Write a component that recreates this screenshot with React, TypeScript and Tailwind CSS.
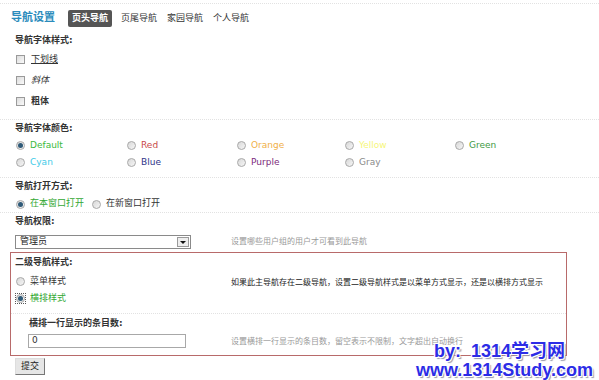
import React from 'react';

const cjk = "font-['DejaVu_Sans','Noto_Sans_CJK_SC',sans-serif]";

function Check({ label, className = '' }: { label: string; className?: string }) {
    return (
        <div className="flex h-[21px] items-center pl-[16px]">
            <span className="h-[9px] w-[9px] border border-[#9a9a9a] bg-gradient-to-br from-[#dcdcdc] to-[#fafafa]" />
            <span className={`ml-[6px] text-[9px] ${className}`}>{label}</span>
        </div>
    );
}

function Radio({ label, checked = false, color = 'text-[#333]', focus = false }: { label: string; checked?: boolean; color?: string; focus?: boolean }) {
    return (
        <div className="flex items-center">
            <span className={`flex items-center justify-center ${focus ? 'outline outline-1 outline-dotted outline-[#555]' : ''}`}>
                <span className="flex h-[9px] w-[9px] items-center justify-center rounded-full border border-[#a8a8a8] bg-gradient-to-br from-[#d8d8d8] to-[#f6f6f6]">
                    {checked && <span className="h-[5px] w-[5px] rounded-full bg-[#2f5a78]" />}
                </span>
            </span>
            <span className={`ml-[5px] text-[9px] ${color}`}>{label}</span>
        </div>
    );
}

function Sep() {
    return <div className="h-0 border-t border-dotted border-[#e2e2e2]" />;
}

function Label({ children, className = '' }: { children: React.ReactNode; className?: string }) {
    return <div className={`flex items-center text-[9px] font-bold text-[#333] ${className}`}>{children}</div>;
}

export default function App() {
    const colors: [string, string][] = [
        ['Default', 'text-[#3cb93c]'],
        ['Red', 'text-[#c84848]'],
        ['Orange', 'text-[#f0b048]'],
        ['Yellow', 'text-[#f6f67a]'],
        ['Green', 'text-[#3f9a45]'],
        ['Cyan', 'text-[#42cbe8]'],
        ['Blue', 'text-[#2e3488]'],
        ['Purple', 'text-[#7c2a7c]'],
        ['Gray', 'text-[#8a8a8a]'],
    ];

    return (
        <div className={`relative h-[380px] w-[599px] overflow-hidden bg-white text-[#333] ${cjk}`}>
            <div className="h-[3px]" />
            <Sep />

            {/* Header */}
            <div className="flex h-[29px] items-center pl-[11px]">
                <span className="text-[11px] font-bold text-[#2b8cbc]">导航设置</span>
                <div className="ml-[13px] flex items-center gap-[8px] text-[9px]">
                    <span className="rounded-[2px] bg-[#555] px-[4px] py-[2px] font-bold text-white">页头导航</span>
                    <span className="px-[1px]">页尾导航</span>
                    <span className="px-[1px]">家园导航</span>
                    <span className="px-[1px]">个人导航</span>
                </div>
            </div>

            {/* Font style */}
            <Label className="h-[16px] pl-[15px]">导航字体样式:</Label>
            <Check label="下划线" className="underline" />
            <Check label="斜体" className="italic" />
            <Check label="粗体" className="font-bold" />
            <div className="h-[7px]" />
            <Sep />

            {/* Font colour */}
            <Label className="h-[17px] pl-[15px]">导航字体颜色:</Label>
            <div className="grid grid-cols-[111px_110px_108px_110px_110px] pl-[16px]">
                {colors.map(([name, c], i) => (
                    <div key={name} className="flex h-[17px] items-center">
                        <Radio label={name} color={c} checked={i === 0} />
                    </div>
                ))}
            </div>
            <div className="h-[6px]" />
            <Sep />

            {/* Open mode */}
            <Label className="h-[18px] pl-[15px]">导航打开方式:</Label>
            <div className="flex h-[16px] items-center gap-[8px] pl-[16px]">
                <Radio label="在本窗口打开" checked color="text-[#33a833]" />
                <Radio label="在新窗口打开" />
            </div>
            <Sep />

            {/* Permission */}
            <Label className="h-[18px] pl-[15px]">导航权限:</Label>
            <div className="mt-[4px] flex items-center pl-[15px]">
                <div className="flex h-[14px] w-[176px] items-center justify-between border border-[#8a8a8a] bg-white pl-[4px] pr-[1px]">
                    <span className="text-[9px] text-[#222]">管理员</span>
                    <span className="flex h-[10px] w-[12px] items-center justify-center border border-[#9a9a9a] bg-[#eee]">
                        <span className="h-0 w-0 border-x-[3px] border-t-[3px] border-x-transparent border-t-[#111]" />
                    </span>
                </div>
                <span className="ml-[40px] text-[8px] text-[#999]">设置哪些用户组的用户才可看到此导航</span>
            </div>

            {/* Sub nav box */}
            <div className="mt-[3px] ml-[10px] w-[557px] border border-[#b86a6a]">
                <Label className="h-[19px] pl-[4px]">二级导航样式:</Label>
                <div className="flex">
                    <div className="w-[220px] pl-[5px]">
                        <div className="flex h-[19px] items-center">
                            <Radio label="菜单样式" />
                        </div>
                        <div className="flex h-[15px] items-center">
                            <Radio label="横排样式" checked focus color="text-[#33a833]" />
                        </div>
                    </div>
                    <div className="flex h-[21px] items-center text-[8px] text-[#222]">
                        如果此主导航存在二级导航，设置二级导航样式是以菜单方式显示，还是以横排方式显示
                    </div>
                </div>
                <div className="h-[7px]" />
                <Sep />
                <Label className="h-[20px] pl-[18px]">横排一行显示的条目数:</Label>
                <div className="flex items-center pb-[7px] pl-[17px]">
                    <div className="flex h-[14px] w-[158px] items-center border border-[#a8a8a8] bg-white pl-[3px] text-[9px] text-[#333]">0</div>
                    <span className="ml-[45px] mt-[2px] text-[8px] text-[#999]">设置横排一行显示的条目数，留空表示不限制，文字超出自动换行</span>
                </div>
            </div>

            {/* Submit */}
            <div className="mt-[2px] flex pl-[15px]">
                <button type="button" className="flex h-[17px] w-[30px] items-center justify-center border border-t-[#ddd] border-l-[#ddd] border-r-[#777] border-b-[#777] bg-[#e6e6e6] text-[9px] text-[#222]">
                    提交
                </button>
            </div>

            {/* Watermark */}
            <div className="absolute right-[6px] bottom-0 flex flex-col items-end font-['Liberation_Sans','Noto_Sans_CJK_SC',sans-serif] text-[18px] leading-[19px] font-bold text-[#2c2ce6] [text-shadow:1px_1px_0_#fff,-1px_-1px_0_#fff,1px_-1px_0_#fff,-1px_1px_0_#fff,2px_2px_1px_#99a]">
                <span className="mr-[28px]">by:&nbsp;&nbsp;1314学习网</span>
                <span>www.1314Study.com</span>
            </div>
        </div>
    );
}
